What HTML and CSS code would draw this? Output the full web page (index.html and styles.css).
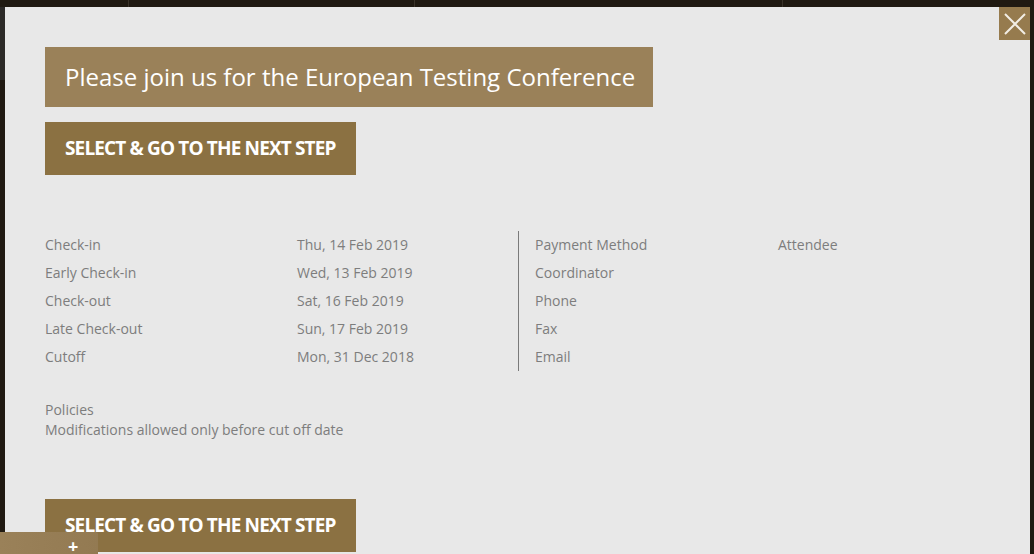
FILE: index.html
```html
<!DOCTYPE html>
<html>
<head>
<meta charset="utf-8">
<link rel="stylesheet" href="styles.css">
</head>
<body>
<div class="page">
  <div class="modal">
    <button class="close" aria-label="Close">
      <svg width="22" height="22" viewBox="0 0 22 22"><path d="M1 1L21 21M21 1L1 21" stroke="#f2ede4" stroke-width="2" fill="none"/></svg>
    </button>
    <div class="banner">Please join us for the European Testing Conference</div>
    <a class="btn">SELECT &amp; GO TO THE NEXT STEP</a>
    <div class="details">
      <div class="half left">
        <div class="lbl">Check-in</div><div class="val">Thu, 14 Feb 2019</div>
        <div class="lbl">Early Check-in</div><div class="val">Wed, 13 Feb 2019</div>
        <div class="lbl">Check-out</div><div class="val">Sat, 16 Feb 2019</div>
        <div class="lbl">Late Check-out</div><div class="val">Sun, 17 Feb 2019</div>
        <div class="lbl">Cutoff</div><div class="val">Mon, 31 Dec 2018</div>
      </div>
      <div class="half right">
        <div class="lbl">Payment Method</div><div class="val">Attendee</div>
        <div class="lbl">Coordinator</div><div class="val"></div>
        <div class="lbl">Phone</div><div class="val"></div>
        <div class="lbl">Fax</div><div class="val"></div>
        <div class="lbl">Email</div><div class="val"></div>
      </div>
    </div>
    <div class="policies">
      <div>Policies</div>
      <div>Modifications allowed only before cut off date</div>
    </div>
    <a class="btn bottom">SELECT &amp; GO TO THE NEXT STEP</a>
  </div>
  <div class="tab">+</div>
</div>
</body>
</html>
```
FILE: styles.css
```css
html, body {
  margin: 0;
  padding: 0;
  height: 100%;
  overflow: hidden;
}
body {
  background: #201a12;
  font-family: "Open Sans", "Noto Sans", sans-serif;
}
.page {
  height: 554px;
  padding: 7px 4px 0 5px;
  box-sizing: border-box;
  position: relative;
  background:
    linear-gradient(#2c2a28, #2c2a28) 0 7px / 5px 73px no-repeat,
    linear-gradient(#3a332a, #3a332a) 128px 0 / 1px 7px no-repeat,
    linear-gradient(#3a332a, #3a332a) 414px 0 / 1px 7px no-repeat,
    linear-gradient(#3a332a, #3a332a) 782px 0 / 1px 7px no-repeat,
    #201a12;
}
.modal {
  background: #e8e8e8;
  height: 100%;
  padding: 40px 40px 0 40px;
  box-sizing: border-box;
  position: relative;
  display: flex;
  flex-direction: column;
  align-items: flex-start;
}
.close {
  position: absolute;
  top: 0;
  right: 0;
  width: 31px;
  height: 33px;
  border: 0;
  padding: 0;
  background: #967b4e;
  display: flex;
  align-items: center;
  justify-content: center;
  cursor: pointer;
}
.banner {
  background: #9a8159;
  color: #fff;
  font-size: 24px;
  height: 60px;
  line-height: 60px;
  padding: 0 20px;
  box-sizing: border-box;
  width: 608px;
  white-space: nowrap;
}
.btn {
  display: block;
  margin-top: 15px;
  background: #8b7142;
  color: #fff;
  font-weight: 700;
  font-size: 19px;
  letter-spacing: -0.85px;
  height: 53px;
  line-height: 53px;
  width: 311px;
  padding: 0 20px;
  box-sizing: border-box;
  white-space: nowrap;
}
.btn.bottom {
  margin-top: 59px;
}
.details {
  margin-top: 56px;
  display: flex;
  width: 944px;
  font-size: 14px;
  color: #7d7d7d;
}
.half {
  display: grid;
  line-height: 28px;
}
.half.left {
  width: 473px;
  grid-template-columns: 252px 1fr;
  border-right: 1px solid #7a7a7a;
}
.half.right {
  padding-left: 16px;
  grid-template-columns: 243px 1fr;
  flex: 1;
}
.policies {
  margin-top: 29px;
  font-size: 14px;
  line-height: 20px;
  color: #7d7d7d;
}
.tab {
  position: absolute;
  left: 0;
  bottom: 0;
  width: 98px;
  height: 22px;
  background: linear-gradient(90deg, #9a8159, #937a52);
  color: #fff;
  font-size: 18px;
  font-weight: 700;
  line-height: 28px;
  padding-left: 68px;
  box-sizing: border-box;
  overflow: hidden;
  border-top-right-radius: 2px;
}
```
